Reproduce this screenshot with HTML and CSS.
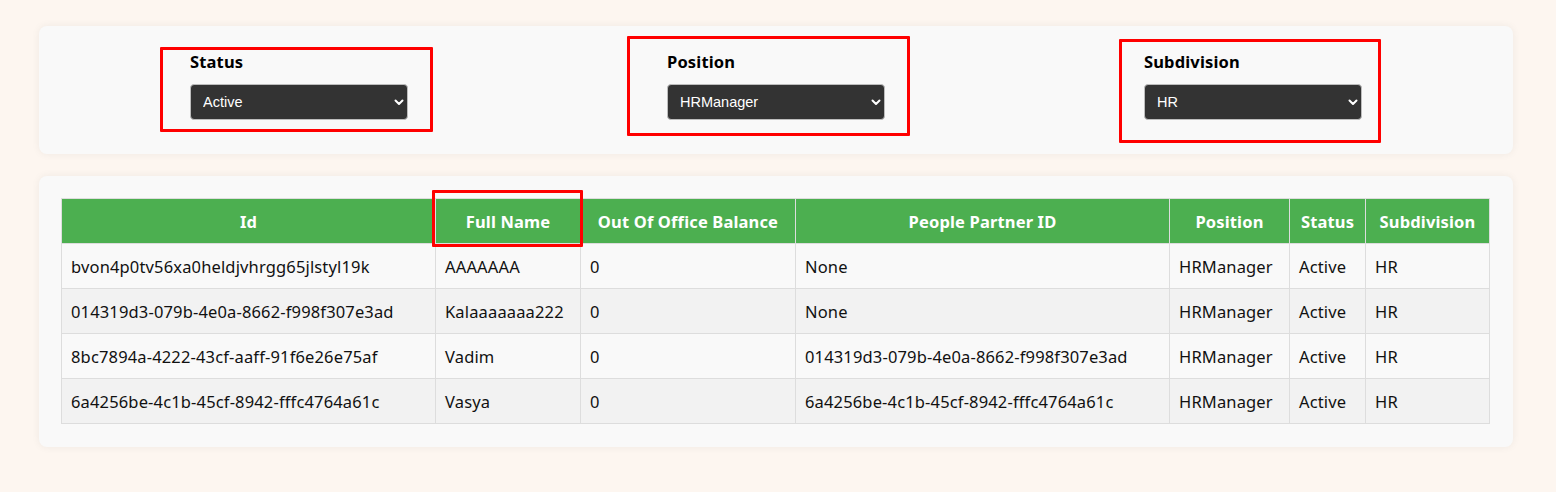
FILE: index.html
```html
<!DOCTYPE html>
<html lang="en">
<head>
<meta charset="utf-8">
<title>Employees</title>
<link rel="stylesheet" href="styles.css">
</head>
<body>
<div class="page">
  <section class="card filters">
    <div class="filter-group">
      <label class="filter-label" for="status">Status</label>
      <div class="select-wrap">
        <select id="status" class="filter-select"><option>Active</option></select>
        <svg class="chev" width="10" height="7" viewBox="0 0 10 7"><path d="M1.5 1.5 L5 5 L8.5 1.5" fill="none" stroke="#fff" stroke-width="2" stroke-linecap="round" stroke-linejoin="round"/></svg>
      </div>
    </div>
    <div class="filter-group">
      <label class="filter-label" for="position">Position</label>
      <div class="select-wrap">
        <select id="position" class="filter-select"><option>HRManager</option></select>
        <svg class="chev" width="10" height="7" viewBox="0 0 10 7"><path d="M1.5 1.5 L5 5 L8.5 1.5" fill="none" stroke="#fff" stroke-width="2" stroke-linecap="round" stroke-linejoin="round"/></svg>
      </div>
    </div>
    <div class="filter-group">
      <label class="filter-label" for="subdivision">Subdivision</label>
      <div class="select-wrap">
        <select id="subdivision" class="filter-select"><option>HR</option></select>
        <svg class="chev" width="10" height="7" viewBox="0 0 10 7"><path d="M1.5 1.5 L5 5 L8.5 1.5" fill="none" stroke="#fff" stroke-width="2" stroke-linecap="round" stroke-linejoin="round"/></svg>
      </div>
    </div>
    <div class="mark mark-status"></div>
    <div class="mark mark-position"></div>
    <div class="mark mark-subdivision"></div>
  </section>

  <section class="card table-card">
    <table class="emp-table">
      <colgroup>
        <col class="c-id"><col class="c-name"><col class="c-bal"><col class="c-pp"><col class="c-pos"><col class="c-st"><col class="c-sub">
      </colgroup>
      <thead>
        <tr><th>Id</th><th>Full Name</th><th>Out Of Office Balance</th><th>People Partner ID</th><th>Position</th><th>Status</th><th>Subdivision</th></tr>
      </thead>
      <tbody>
        <tr><td>bvon4p0tv56xa0heldjvhrgg65jlstyl19k</td><td>AAAAAAA</td><td>0</td><td>None</td><td>HRManager</td><td>Active</td><td>HR</td></tr>
        <tr><td>014319d3-079b-4e0a-8662-f998f307e3ad</td><td>Kalaaaaaaa222</td><td>0</td><td>None</td><td>HRManager</td><td>Active</td><td>HR</td></tr>
        <tr><td>8bc7894a-4222-43cf-aaff-91f6e26e75af</td><td>Vadim</td><td>0</td><td>014319d3-079b-4e0a-8662-f998f307e3ad</td><td>HRManager</td><td>Active</td><td>HR</td></tr>
        <tr><td>6a4256be-4c1b-45cf-8942-fffc4764a61c</td><td>Vasya</td><td>0</td><td>6a4256be-4c1b-45cf-8942-fffc4764a61c</td><td>HRManager</td><td>Active</td><td>HR</td></tr>
      </tbody>
    </table>
    <div class="mark mark-name"></div>
  </section>
</div>
</body>
</html>
```

FILE: styles.css
```css
html, body {
  margin: 0;
  padding: 0;
  background: #fdf6f0;
}
body {
  font-family: "Noto Sans", "Open Sans", sans-serif;
  font-size: 16.5px;
  letter-spacing: 0.15px;
  color: #111;
}
.page {
  padding: 26px 43px 40px 39px;
  display: flex;
  flex-direction: column;
  gap: 22px;
}
.card {
  position: relative;
  background: #f9f9f9;
  border-radius: 8px;
  box-shadow: 0 0 8px rgba(0, 0, 0, 0.06);
}
.filters {
  display: flex;
  justify-content: space-around;
  padding: 25px 21.5px 34px;
}
.filter-group {
  display: flex;
  flex-direction: column;
  width: 218px;
}
.filter-label {
  font-weight: 700;
  font-size: 16.5px;
  line-height: 21px;
  margin-bottom: 12px;
  color: #000;
}
.select-wrap {
  position: relative;
}
.filter-select {
  appearance: none;
  -webkit-appearance: none;
  width: 100%;
  height: 36px;
  background: #333;
  color: #fff;
  border: 1px solid #bdbdbd;
  border-radius: 4px;
  padding: 0 12px;
  font-family: "Liberation Sans", Arial, sans-serif;
  font-size: 14.5px;
  letter-spacing: 0;
  outline: none;
}
.chev {
  position: absolute;
  right: 4px;
  top: 15px;
  pointer-events: none;
}
.mark {
  position: absolute;
  border: 3px solid #ff0000;
  box-sizing: border-box;
  border-radius: 1px;
}
.mark-status { left: 121px; top: 21px; width: 273px; height: 85px; }
.mark-position { left: 588px; top: 10px; width: 283px; height: 100px; }
.mark-subdivision { left: 1080px; top: 13px; width: 262px; height: 104px; }
.mark-name { left: 393px; top: 14px; width: 151px; height: 57px; }

.table-card {
  padding: 22px 23px 23px 22px;
}
.emp-table {
  width: 100%;
  border-collapse: collapse;
  table-layout: fixed;
  font-size: 16.5px;
}
.c-id { width: 374px; }
.c-name { width: 145px; }
.c-bal { width: 215px; }
.c-pp { width: 374px; }
.c-pos { width: 120px; }
.c-st { width: 76px; }
.c-sub { width: 124px; }
.emp-table th,
.emp-table td {
  border: 1px solid #dddddd;
  padding: 12px 9px 11px;
  line-height: 21px;
  white-space: nowrap;
  overflow: hidden;
}
.emp-table th {
  background: #4caf50;
  color: #fff;
  font-weight: 700;
  text-align: center;
}
.emp-table td {
  text-align: left;
  color: #111;
}
.emp-table tbody tr:nth-child(odd) td { background: #f9f9f9; }
.emp-table tbody tr:nth-child(even) td { background: #f2f2f2; }
```
